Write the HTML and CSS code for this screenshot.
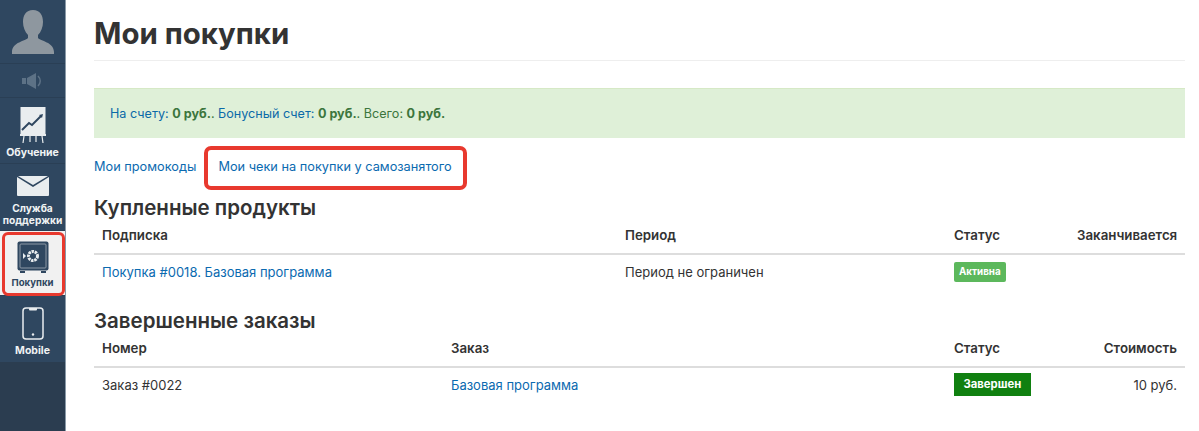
FILE: index.html
```html
<!DOCTYPE html>
<html lang="ru">
<head>
<meta charset="utf-8">
<title>Мои покупки</title>
<link rel="stylesheet" href="styles.css">
</head>
<body>
<div class="layout">
  <nav class="side">
    <div class="side-item avatar">
      <svg width="44" height="44" viewBox="0 0 44 44"><path fill="#8e979f" d="M22 0c7 0 10 5 10 12 0 5-2 10-5 13v3c2 3 16 4 16 14v2H1v-2c0-10 14-11 16-14v-3c-3-3-5-8-5-13C12 5 15 0 22 0z"/></svg>
    </div>
    <div class="side-item sound">
      <svg width="22" height="16" viewBox="0 0 22 16"><path fill="#5d7286" d="M0 5h4v6H0zM5 5l9-5v16l-9-5z"/><path fill="none" stroke="#5d7286" stroke-width="1.5" d="M16 3c3 3 3 7 0 10"/></svg>
    </div>
    <a class="side-item learn">
      <svg width="26" height="36" viewBox="0 0 26 36"><rect width="25" height="27" fill="#e9edef" x="0.5"/><path d="M2 23l7-7 3 2 9-9" fill="none" stroke="#2f4760" stroke-width="2"/><path d="M19 8l4-1-1 4z" fill="#2f4760"/><rect x="0" y="27" width="26" height="2" fill="#e9edef"/><path d="M4 29l-1 7M10 29v6M16 29v6M22 29l1 7" stroke="#e9edef" stroke-width="1.2"/></svg>
      <span>Обучение</span>
    </a>
    <a class="side-item support">
      <svg width="32" height="20" viewBox="0 0 32 20"><path fill="#e9edef" d="M0 1l16 10L32 1v18a1 1 0 0 1-1 1H1a1 1 0 0 1-1-1z"/><path fill="#e9edef" d="M1 0h30l-15 9z"/></svg>
      <span>Служба<br>поддержки</span>
    </a>
    <a class="side-item active">
      <svg width="32" height="32" viewBox="0 0 32 32"><rect x="0.5" y="0.5" width="31" height="29" rx="2" fill="#2f4760"/><rect x="3" y="3" width="26" height="24" rx="1" fill="none" stroke="#8e9aa6" stroke-width="1"/><path d="M3 30h5v2H3zM24 30h5v2h-5z" fill="#2f4760"/><path d="M6 12l3 3-3 3z" fill="#e9edef"/><circle cx="16" cy="15" r="4.5" fill="none" stroke="#e9edef" stroke-width="3" stroke-dasharray="2.4 0.8"/></svg>
      <span>Покупки</span>
    </a>
    <a class="side-item mobile">
      <svg width="22" height="33" viewBox="0 0 22 33"><rect x="1" y="1" width="20" height="31" rx="3" fill="none" stroke="#e9edef" stroke-width="1.5"/><path d="M7 1h8v1.5a1 1 0 0 1-1 1H8a1 1 0 0 1-1-1z" fill="#e9edef"/><circle cx="11" cy="27.5" r="1.2" fill="#e9edef"/></svg>
      <span>Mobile</span>
    </a>
    <div class="side-rest"></div>
  </nav>
  <main class="main">
    <h1 class="title">Мои покупки</h1>
    <div class="alert">
      <span><a class="alert-link">На счету:</a> <b>0 руб.</b>. <a class="alert-link">Бонусный счет:</a> <b>0 руб.</b>. Всего: <b>0 руб.</b></span>
    </div>
    <div class="links">
      <a class="link">Мои промокоды</a>
      <a class="link marked">Мои чеки на покупки у самозанятого</a>
    </div>
    <h3 class="section">Купленные продукты</h3>
    <table class="data products">
      <thead><tr><th class="c1">Подписка</th><th class="c2">Период</th><th class="c3">Статус</th><th class="c4">Заканчивается</th></tr></thead>
      <tbody><tr><td><a class="link">Покупка #0018. Базовая программа</a></td><td>Период не ограничен</td><td><span class="badge">Активна</span></td><td class="c4"></td></tr></tbody>
    </table>
    <h3 class="section">Завершенные заказы</h3>
    <table class="data orders">
      <thead><tr><th class="c1">Номер</th><th class="c2">Заказ</th><th class="c3">Статус</th><th class="c4">Стоимость</th></tr></thead>
      <tbody><tr><td>Заказ #0022</td><td><a class="link">Базовая программа</a></td><td><span class="badge done">Завершен</span></td><td class="c4">10 руб.</td></tr></tbody>
    </table>
  </main>
</div>
</body>
</html>
```
FILE: styles.css
```css
* { box-sizing: border-box; }
html, body { margin: 0; height: 100%; }
body { font-family: Inter, "Liberation Sans", sans-serif; font-size: 13px; color: #333; background: #fff; overflow: hidden; }
.layout { display: flex; height: 431px; }
.side { width: 66px; flex: none; background: #2f4760; border-right: 1px solid #8a9aa8; display: flex; flex-direction: column; position: relative; }
.side-item { display: flex; flex-direction: column; align-items: center; justify-content: flex-start; color: #f0f3f4; font-size: 10.5px; font-weight: 700; line-height: 12px; text-align: center; border-bottom: 1px solid #2a3f55; }
.avatar { height: 64px; padding-top: 10px; }
.sound { height: 34px; padding-top: 9px; }
.learn { height: 66px; padding-top: 9px; gap: 4px; }
.support { height: 67px; padding-top: 12px; gap: 6px; font-size: 10.2px; }
.active { height: 65px; padding-top: 10px; gap: 4px; background: #f1f1f1; color: #2f4760; position: relative; font-size: 9.6px; }
.active::after { content: ""; position: absolute; left: 2px; right: 0; top: 1px; bottom: -1px; border: 3px solid #e8392e; border-radius: 6px; }
.mobile { height: 66px; padding-top: 11px; gap: 5px; border-bottom: 0; }
.side-rest { flex: 1; background: #2b3d50; }
.main { flex: 1; padding: 0 14px 0 28px; min-width: 0; }
.title { margin: 0; height: 61px; padding-top: 16px; font-size: 29.4px; line-height: 36px; font-weight: 700; color: #333; border-bottom: 1px solid #eee; }
.alert { margin-top: 27px; height: 50px; padding: 0 16px; display: flex; align-items: center; white-space: pre-wrap; background: #dff0d8; color: #3c763d; border-top: 1px solid #d6e9c6; font-size: 12.6px; }
.alert b { font-weight: 700; }
.alert-link { color: #0b6aa8; }
.links { display: flex; align-items: flex-start; gap: 22px; height: 58px; padding-top: 21px; line-height: 16px; font-size: 12.75px; }
.link { color: #0b6ab0; }
.marked { position: relative; }
.marked::after { content: ""; position: absolute; left: -14px; right: -15px; top: -13px; bottom: -15px; border: 4px solid #e8392e; border-radius: 7px; }
.section { margin: 0; font-size: 20.5px; line-height: 24px; font-weight: 600; color: #333; height: 24px; }
.data { width: 100%; border-collapse: collapse; table-layout: fixed; }
.data th { text-align: left; font-size: 13.3px; font-weight: 600; height: 34px; padding: 0 8px 3px; border-bottom: 2px solid #ddd; }
.data td { height: 36px; padding: 0 8px 2px; }
.data .c4 { text-align: right; }
.products .c1 { width: 523px; }
.products .c2 { width: 329px; }
.products .c3 { width: 123px; }
.products .c4 { width: auto; }
.orders .c1 { width: 349px; }
.orders .c2 { width: 503px; }
.orders .c3 { width: 123px; }
.orders .c4 { width: auto; }
.products { margin-bottom: 19px; }
.badge { display: inline-block; vertical-align: middle; background: #5cb85c; color: #fff; font-size: 9.8px; font-weight: 700; line-height: 14px; padding: 3px 5px; border-radius: 2px; }
.badge.done { background: #108010; font-size: 11.3px; line-height: 15px; padding: 4px 9.5px; border-radius: 0; }
```
